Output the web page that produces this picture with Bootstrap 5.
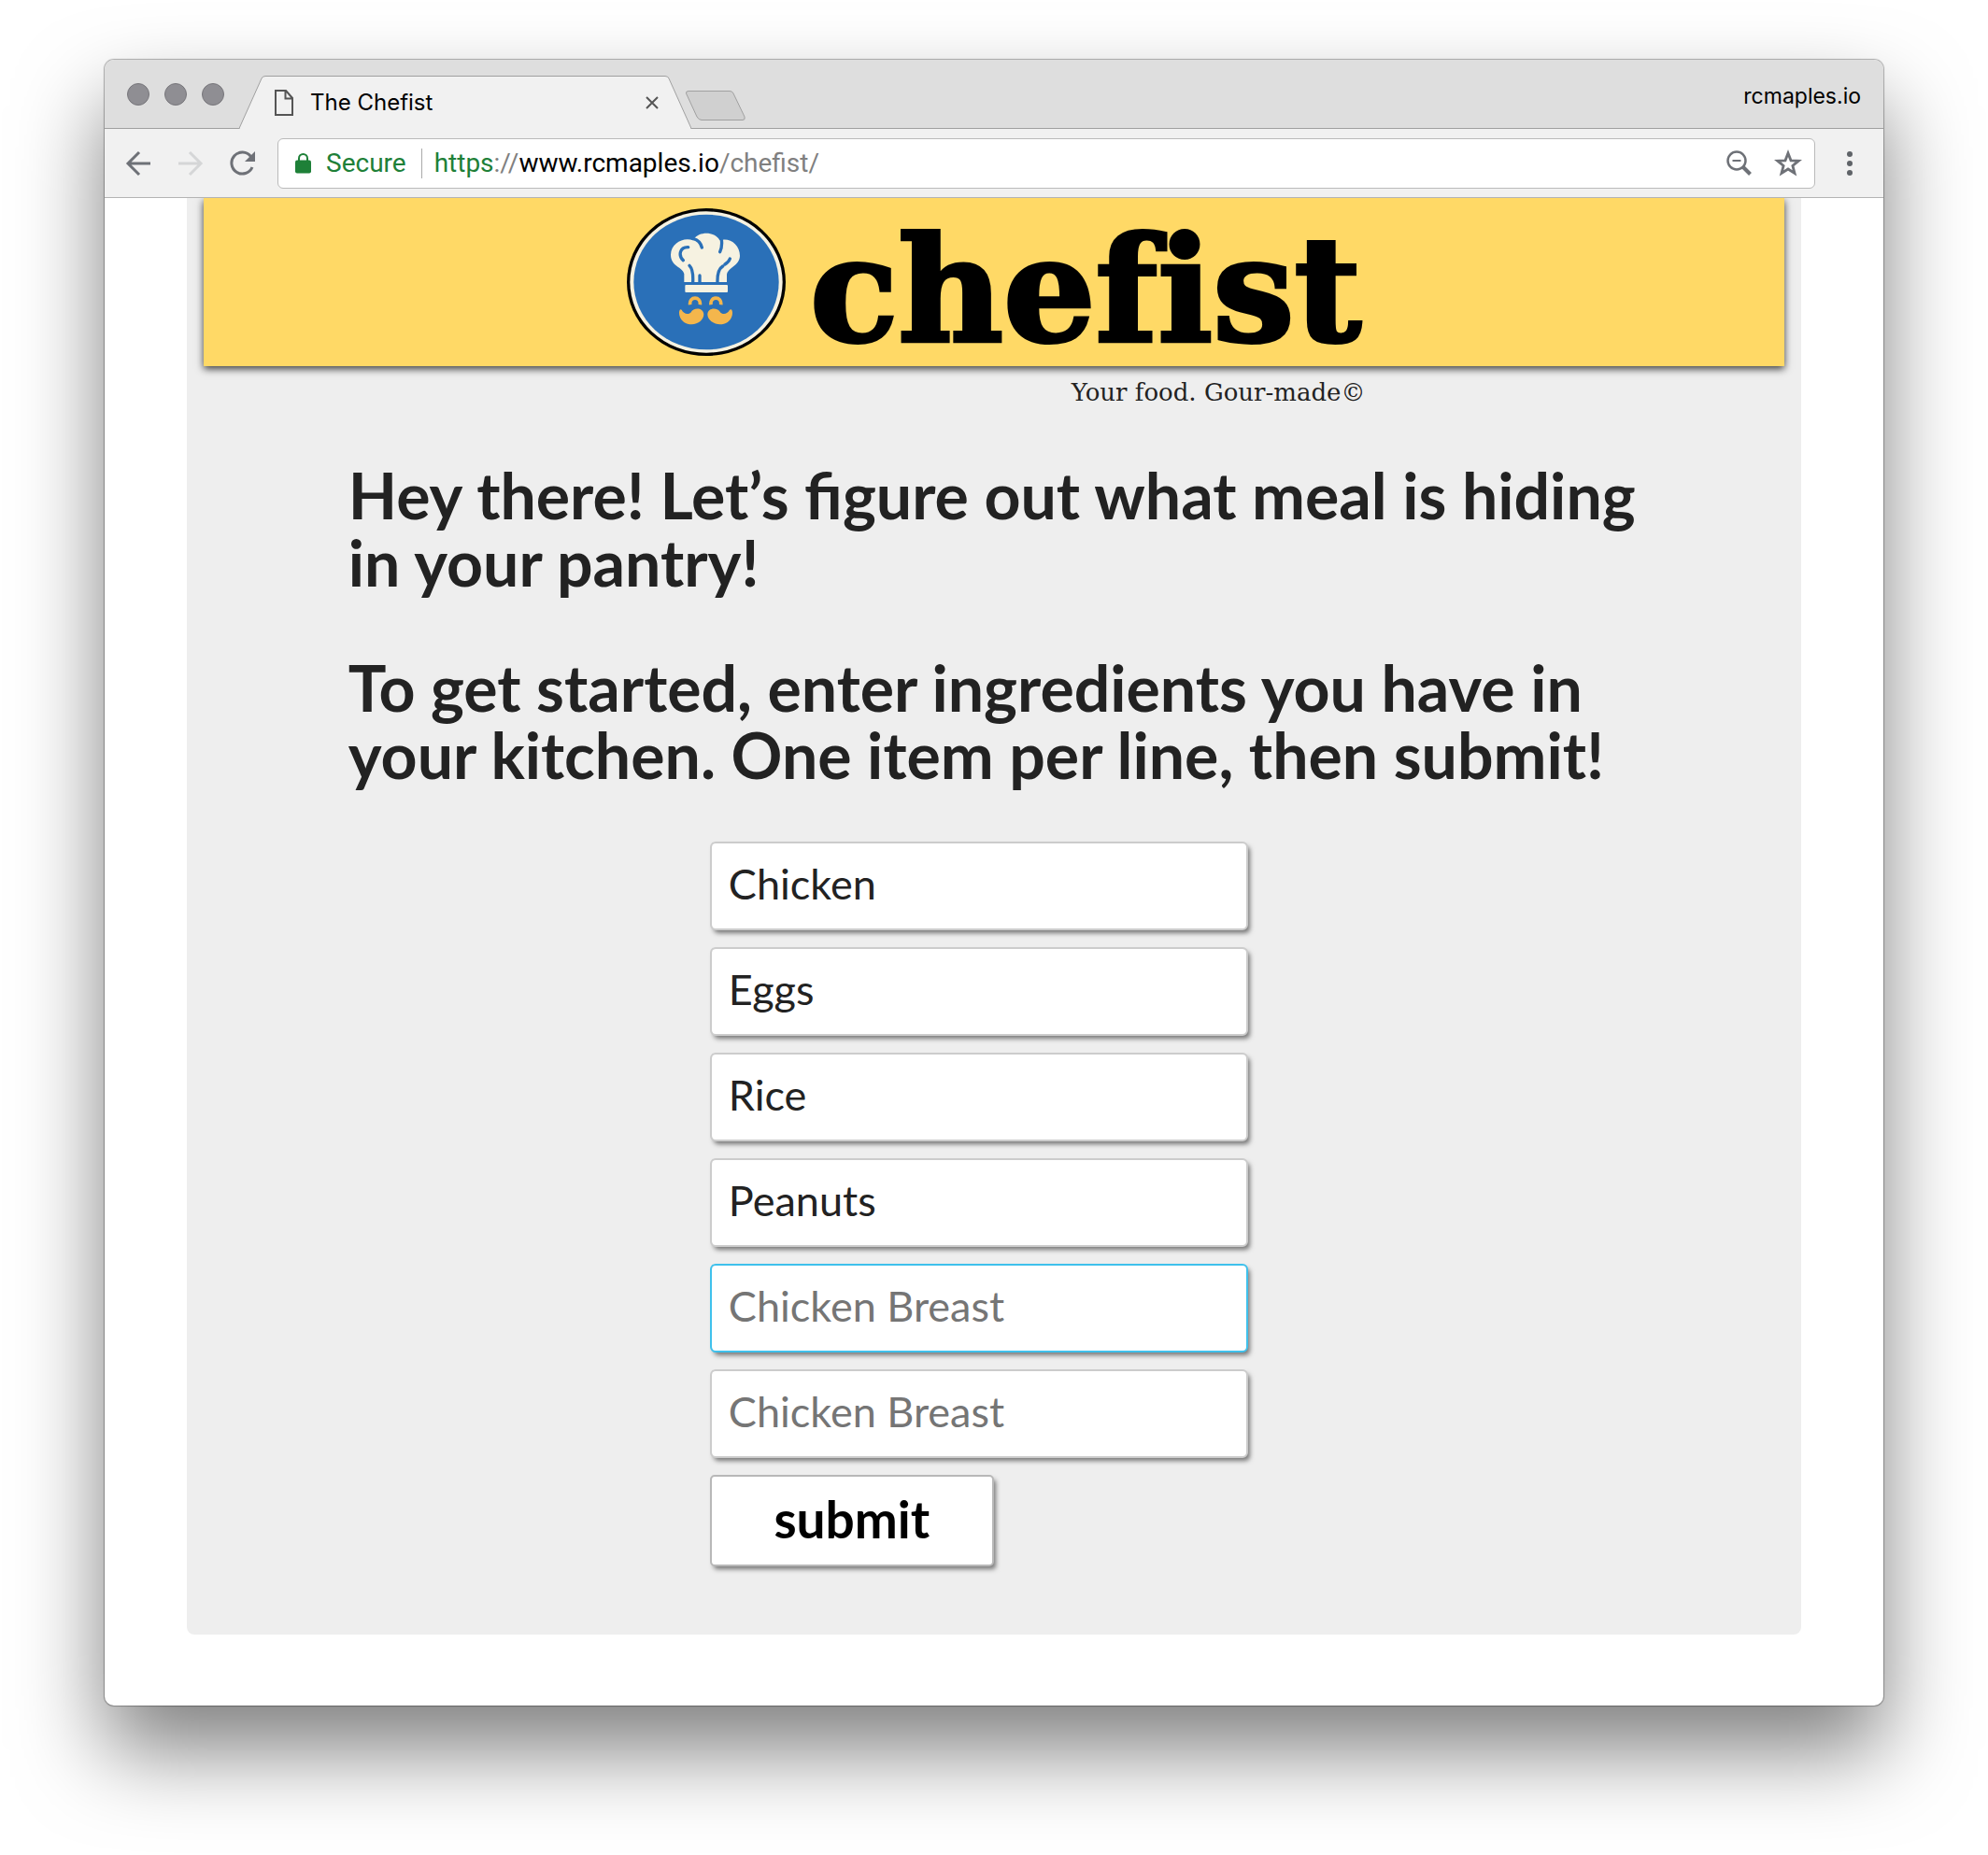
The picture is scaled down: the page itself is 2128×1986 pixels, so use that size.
<!DOCTYPE html>
<html lang="en">
<head>
<meta charset="utf-8">
<meta name="viewport" content="width=device-width, initial-scale=1">
<title>The Chefist</title>
<link href="https://cdn.jsdelivr.net/npm/bootstrap@5.3.0/dist/css/bootstrap.min.css" rel="stylesheet">
<style>
  body { background: #fff; padding: 64px 112px 160px; font-family: Roboto, "Liberation Sans", sans-serif; }
  svg { display: block; flex: none; }
  button.plain { border: 0; background: none; padding: 0; }
  .browser { border-radius: 10px; background: #fff; box-shadow: 0 0 1px 1px rgba(0,0,0,.3), 0 48px 92px rgba(0,0,0,.5); }
  .titlebar { height: 74px; background: #dedede; border-bottom: 1px solid #a0a0a0; border-radius: 10px 10px 0 0; padding: 0 24px; }
  .lights { gap: 16px; margin-right: 16px; padding-top: 1px; }
  .lights span { width: 24px; height: 24px; border-radius: 50%; background: #8f8e93; border: 1px solid #77767b; }
  .tab { width: 484px; height: 57px; margin-bottom: -1px; padding: 0 35px 0 38px; }
  .tab-shape { position: absolute; left: 0; top: 0; }
  .tab > :not(.tab-shape) { position: relative; }
  .tab-title, .profile { font: 24px/28px Inter, Roboto, sans-serif; color: #000; }
  .tab-title { margin-left: 18px; }
  .profile { font-size: 23px; padding-top: 5px; }
  .newtab { margin: 16px 0 0 -7px; }
  .toolbar { height: 74px; background: #f1f1f1; border-bottom: 1px solid #b4b4b4; padding: 0 33px 0 22px; }
  .nav-icons { gap: 28px; margin-right: 23px; }
  .address { height: 54px; background: #fff; border: 1px solid #bababa; border-radius: 6px; padding: 0 13px 0 18px; font-size: 28px; line-height: 32px; }
  .secure { color: #1e8038; margin-left: 16px; padding-right: 16px; margin-right: 13px; border-right: 1px solid #aaa; }
  .url { color: #808080; text-decoration: none; }
  .url b { font-weight: 400; color: #000; }
  .url i { font-style: normal; color: #1e8038; }
  .menu { margin-left: 34px; }
  .viewport { padding: 0 88px 76px; }
  .sheet { background: #eee; border-radius: 0 0 8px 8px; padding-bottom: 73px; color: #222; font-family: Lato, "Open Sans", sans-serif; }
  .masthead { height: 180px; margin: 0 18px; background: #ffd966; box-shadow: 0 3px 8px rgba(0,0,0,.75); clip-path: inset(0 -12px -16px -12px); gap: 26px; }
  .wordmark { font: bold 155px/180px "DejaVu Serif", serif; font-variant-ligatures: none; -webkit-text-stroke: 4px #000; color: #000; padding-top: 18px; }
  .tagline { font: 26px/32px "DejaVu Serif", serif; margin: 12px 27% 0 0; }
  .content { width: 80%; margin: 58px auto 0; }
  .content h1 { font-size: 68px; line-height: 72px; font-weight: 700; margin: 0 0 62px; }
  .pantry { margin: -5px 0 0 28%; gap: 18px; }
  .pantry .form-control { height: 95px; border: 2px solid #ccc; border-radius: 6px; padding: 0 18px 5px; font-size: 45px; color: #222; box-shadow: 3px 4px 5px -1px rgba(0,0,0,.5); }
  .pantry .form-control::placeholder { color: #757575; opacity: 1; }
  .pantry .form-control.current { border-color: #3fc1ec; }
  .submit { width: 304px; height: 98px; background: #fff; border: 2px solid #b8b8b8; border-radius: 5px; font-size: 55px; line-height: 60px; font-weight: 700; color: #000; box-shadow: 3px 4px 5px -1px rgba(0,0,0,.5); padding: 0 0 4px; }
</style>
</head>
<body>
<div class="browser">
  <div class="titlebar d-flex align-items-end">
    <div class="lights d-flex align-self-center"><span></span><span></span><span></span></div>
    <div class="tab position-relative d-flex align-items-center">
      <svg class="tab-shape" width="484" height="57" viewBox="0 0 484 57"><path d="M0 56.5 24 3Q25 .5 28 .5H456Q459 .5 460 3L484 56.5" fill="#f1f1f1" stroke="#a0a0a0"/><path d="M1 56.5H483" stroke="#f1f1f1" stroke-width="1"/></svg>
      <svg width="20" height="28" viewBox="0 0 20 28" fill="none" stroke="#555" stroke-width="2"><path d="M1 1H12L19 9V27H1ZM11.500 1V9.500H19"/></svg>
      <span class="tab-title">The Chefist</span>
      <button class="plain ms-auto" aria-label="Close tab"><svg width="14" height="14" viewBox="0 0 14 14" stroke="#555" stroke-width="2"><path d="M1 1 13 13M13 1 1 13"/></svg></button>
    </div>
    <button class="plain newtab align-self-start" aria-label="New tab"><svg width="67" height="50" viewBox="0 0 67 50"><path d="M4 17.500H48Q51 17.500 52 20L64 45Q65 48.500 62 48.500H18Q15 48.500 13 45L1.500 20Q1 17.500 4 17.500Z" fill="#d0d0d0" stroke="#a0a0a0"/></svg></button>
    <span class="profile ms-auto align-self-center">rcmaples.io</span>
  </div>
  <div class="toolbar d-flex align-items-center">
    <div class="nav-icons d-flex">
      <button class="plain" aria-label="Back"><svg width="28" height="28" viewBox="0 0 28 28" fill="none" stroke="#6e7177" stroke-width="3"><path d="M27 14H3M15 2 3 14 15 26"/></svg></button>
      <button class="plain" aria-label="Forward"><svg width="28" height="28" viewBox="0 0 28 28" fill="none" stroke="#d5d6d7" stroke-width="3"><path d="M1 14H25M13 2 25 14 13 26"/></svg></button>
      <button class="plain" aria-label="Reload"><svg width="28" height="28" viewBox="0 0 28 28"><path d="M24 18A11.500 11.500 0 1 1 22.500 6.500" fill="none" stroke="#6e7177" stroke-width="3"/><path d="M27 1V12H16Z" fill="#6e7177"/></svg></button>
    </div>
    <div class="address d-flex align-items-center flex-grow-1">
      <svg width="17" height="22" viewBox="0 0 17 22"><rect y="7.500" width="17" height="14" rx="2" fill="#1e8038"/><path d="M4 9V5.500a4.500 4.500 0 0 1 9 0V9" fill="none" stroke="#1e8038" stroke-width="2"/></svg>
      <span class="secure">Secure</span>
      <a class="url" href="#"><i>https</i>://<b>www.rcmaples.io</b>/chefist/</a>
      <button class="plain ms-auto" aria-label="Zoom"><svg width="27" height="27" viewBox="0 0 27 27" fill="none" stroke="#6e7177"><circle cx="11" cy="11" r="9.500" stroke-width="2.500"/><path d="M6.500 11H15.500" stroke-width="2"/><path d="M18 18 25.500 25.500" stroke-width="4"/></svg></button>
      <button class="plain ms-4" aria-label="Bookmark"><svg width="30" height="30" viewBox="0 0 30 30"><path d="M15 4 18 11.800 26.300 12.200 19.900 17.400 22 25.500 15 21 8 25.500 10.100 17.400 3.700 12.200 12 11.800Z" fill="none" stroke="#6e7177" stroke-width="2.800"/></svg></button>
    </div>
    <button class="plain menu" aria-label="Menu"><svg width="6" height="28" viewBox="0 0 6 28" fill="#5f6368"><circle cx="3" cy="4" r="3"/><circle cx="3" cy="14" r="3"/><circle cx="3" cy="24" r="3"/></svg></button>
  </div>
  <main class="viewport">
    <div class="sheet">
      <header class="masthead d-flex align-items-center justify-content-center">
        <svg width="170" height="158" viewBox="36 57 510 474">
          <ellipse cx="291" cy="294" rx="255" ry="237" fill="#000"/>
          <ellipse cx="291" cy="294" rx="245" ry="227" fill="#f6f2e1"/>
          <ellipse cx="291" cy="294" rx="233" ry="217" fill="#2a70b8"/>
          <path d="M220 294V268C216 244 177 245 177 206C178 168 219 148 249 160C263 130 320 130 334 160C366 149 399 174 399 209C398 242 361 246 357 270V294Z" fill="#f6f2e1"/>
          <g fill="none" stroke="#2a70b8" stroke-width="10" stroke-linecap="round">
            <path d="M247 154Q271 159 277 183M340 158Q343 179 335 197M233 182C205 181 201 209 217 224M237 241Q250 254 248 294M270 273V294M344 243Q326 254 327 294M367 219Q363 230 351 237"/>
          </g>
          <rect x="223" y="303" width="137" height="24" rx="3" fill="#f6f2e1"/>
          <path d="M239 367C235 338 275 338 271 367M306 367C302 338 342 338 338 367" fill="none" stroke="#f4b64c" stroke-width="11"/>
          <path d="M208 382C204 385 203 392 205 401C210 420 226 430 244 430C266 429 283 415 283 397C281 376 251 374 241 392C231 401 217 394 212 383ZM371 382C375 385 376 392 374 401C369 420 353 430 335 430C313 429 295 415 295 397C297 376 327 374 337 392C347 401 361 394 366 383Z" fill="#f4b64c"/>
        </svg>
        <span class="wordmark">chefist</span>
      </header>
      <p class="tagline text-end">Your food. Gour-made©</p>
      <div class="content">
        <h1>Hey there! Let’s figure out what meal is hiding in your pantry!</h1>
        <h1>To get started, enter ingredients you have in your kitchen. One item per line, then submit!</h1>
        <form class="pantry col-5 d-flex flex-column align-items-start">
          <input class="form-control" type="text" aria-label="Ingredient 1" placeholder="Chicken Breast" value="Chicken">
          <input class="form-control" type="text" aria-label="Ingredient 2" placeholder="Chicken Breast" value="Eggs">
          <input class="form-control" type="text" aria-label="Ingredient 3" placeholder="Chicken Breast" value="Rice">
          <input class="form-control" type="text" aria-label="Ingredient 4" placeholder="Chicken Breast" value="Peanuts">
          <input class="form-control current" type="text" aria-label="Ingredient 5" placeholder="Chicken Breast">
          <input class="form-control" type="text" aria-label="Ingredient 6" placeholder="Chicken Breast">
          <button class="submit" type="button">submit</button>
        </form>
      </div>
    </div>
  </main>
</div>
<script src="https://cdn.jsdelivr.net/npm/bootstrap@5.3.0/dist/js/bootstrap.bundle.min.js"></script>
</body>
</html>
